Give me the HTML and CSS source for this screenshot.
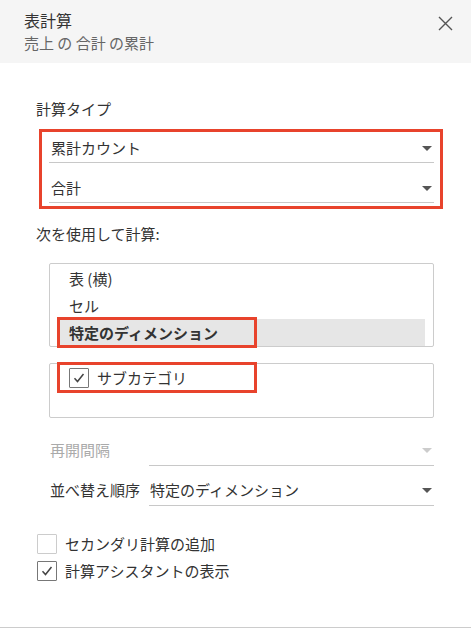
FILE: index.html
```html
<!DOCTYPE html>
<html lang="ja">
<head>
  <meta charset="UTF-8">
  <meta name="viewport" content="width=device-width, initial-scale=1.0">
  <title>表計算</title>
  <link rel="stylesheet" href="styles.css">
</head>
<body>
<div class="panel">
  <div class="header">
    <div class="header-text">
      <div class="title">表計算</div>
      <div class="subtitle">売上 の 合計 の累計</div>
    </div>
    <button class="close" aria-label="閉じる">
      <svg width="15" height="15" viewBox="0 0 15 15"><path d="M1 1L14 14M14 1L1 14" stroke="#555" stroke-width="1.4" fill="none"/></svg>
    </button>
  </div>

  <div class="content">
    <div class="label">計算タイプ</div>

    <div class="mark-box">
      <div class="select">
        <span class="value">累計カウント</span>
        <span class="arrow"></span>
      </div>
      <div class="select">
        <span class="value">合計</span>
        <span class="arrow"></span>
      </div>
    </div>

    <div class="label label-using">次を使用して計算:</div>

    <div class="list">
      <div class="list-item">表 (横)</div>
      <div class="list-item">セル</div>
      <div class="list-item selected">特定のディメンション<span class="mark"></span></div>
    </div>

    <div class="list fields">
      <div class="field-row">
        <span class="checkbox checked">
          <svg width="12" height="10" viewBox="0 0 12 10"><path d="M1.5 5.2L4.5 8.5L10.5 1" stroke="#444" stroke-width="1.5" fill="none"/></svg>
        </span>
        <span>サブカテゴリ</span>
        <span class="mark"></span>
      </div>
    </div>

    <div class="options">
      <div class="option-row disabled">
        <span class="option-label">再開間隔</span>
        <div class="select select-inline">
          <span class="value"></span>
          <span class="arrow"></span>
        </div>
      </div>
      <div class="option-row">
        <span class="option-label">並べ替え順序</span>
        <div class="select select-inline">
          <span class="value">特定のディメンション</span>
          <span class="arrow"></span>
        </div>
      </div>
    </div>

    <div class="checks">
      <label class="check-row">
        <span class="checkbox"></span>
        <span>セカンダリ計算の追加</span>
      </label>
      <label class="check-row">
        <span class="checkbox checked">
          <svg width="12" height="10" viewBox="0 0 12 10"><path d="M1.5 5.2L4.5 8.5L10.5 1" stroke="#444" stroke-width="1.5" fill="none"/></svg>
        </span>
        <span>計算アシスタントの表示</span>
      </label>
    </div>
  </div>
</div>
</body>
</html>
```

FILE: styles.css
```css
body {
  margin: 0;
  font-family: "Noto Sans CJK JP", "Noto Sans", sans-serif;
  font-size: 15px;
  line-height: 20px;
  color: #333;
  background-color: white;
}
.panel {
  width: 471px;
  height: 628px;
  box-sizing: border-box;
  border-bottom: 1px solid #ccc;
}
.header {
  height: 63px;
  box-sizing: border-box;
  padding: 9px 18px 0 24px;
  background-color: #f5f5f5;
  display: flex;
  justify-content: space-between;
  align-items: flex-start;
}
.title {
  font-size: 16px;
  line-height: 22px;
  color: #333;
}
.subtitle {
  font-size: 15px;
  line-height: 24px;
  color: #666;
}
.close {
  border: none;
  background: none;
  padding: 0;
  margin-top: 7px;
  width: 15px;
  height: 15px;
  cursor: pointer;
}
.close svg {
  display: block;
}
.content {
  padding: 36px 0 0 36px;
}
.mark-box {
  width: 404px;
  margin: 10px 0 0 3px;
  box-sizing: border-box;
  border: 3px solid #e8432c;
  padding: 0 6px 3px 7px;
  display: flex;
  flex-direction: column;
  gap: 9px;
}
.select {
  display: flex;
  justify-content: space-between;
  align-items: center;
  padding: 6px 0 4px 2px;
  border-bottom: 1px solid #c8c8c8;
}
.value {
  min-height: 20px;
}
.arrow {
  width: 0;
  height: 0;
  margin-right: 2px;
  border-left: 5px solid transparent;
  border-right: 5px solid transparent;
  border-top: 5px solid #555;
}
.label-using {
  margin-top: 15px;
}
.list {
  position: relative;
  width: 385px;
  margin: 19px 0 0 13px;
  box-sizing: border-box;
  border: 1px solid #ccc;
  border-radius: 2px;
  padding-top: 1px;
}
.list-item {
  position: relative;
  margin: 0 8px;
  padding: 4px 11px 3px;
}
.list-item.selected {
  background-color: #e6e6e6;
  font-weight: bold;
}
.mark {
  position: absolute;
  left: -1px;
  top: -2px;
  width: 200px;
  height: 31px;
  box-sizing: border-box;
  border: 3px solid #e8432c;
}
.fields {
  height: 55px;
  margin-top: 16px;
  padding-top: 0;
}
.field-row {
  position: relative;
  margin: 0 8px;
  height: 28px;
  padding: 0 11px;
  display: flex;
  align-items: center;
  gap: 8px;
}
.checkbox {
  width: 20px;
  height: 20px;
  box-sizing: border-box;
  border: 1px solid #ccc;
  border-radius: 1px;
  display: flex;
  align-items: center;
  justify-content: center;
  background-color: white;
}
.checkbox.checked {
  border-color: #777;
}
.options {
  margin: 22px 0 0 14px;
  width: 384px;
  display: flex;
  flex-direction: column;
  gap: 14px;
}
.option-row {
  display: flex;
  align-items: flex-end;
}
.option-label {
  width: 99px;
  flex-shrink: 0;
  padding-bottom: 6px;
}
.select-inline {
  flex: 1;
  padding: 0 0 5px 1px;
}
.disabled .option-label {
  color: #aaa;
}
.disabled .arrow {
  border-top-color: #ccc;
}
.checks {
  margin: 28px 0 0 1px;
  display: flex;
  flex-direction: column;
  gap: 7px;
}
.check-row {
  display: flex;
  align-items: center;
  gap: 8px;
  height: 20px;
}
```
